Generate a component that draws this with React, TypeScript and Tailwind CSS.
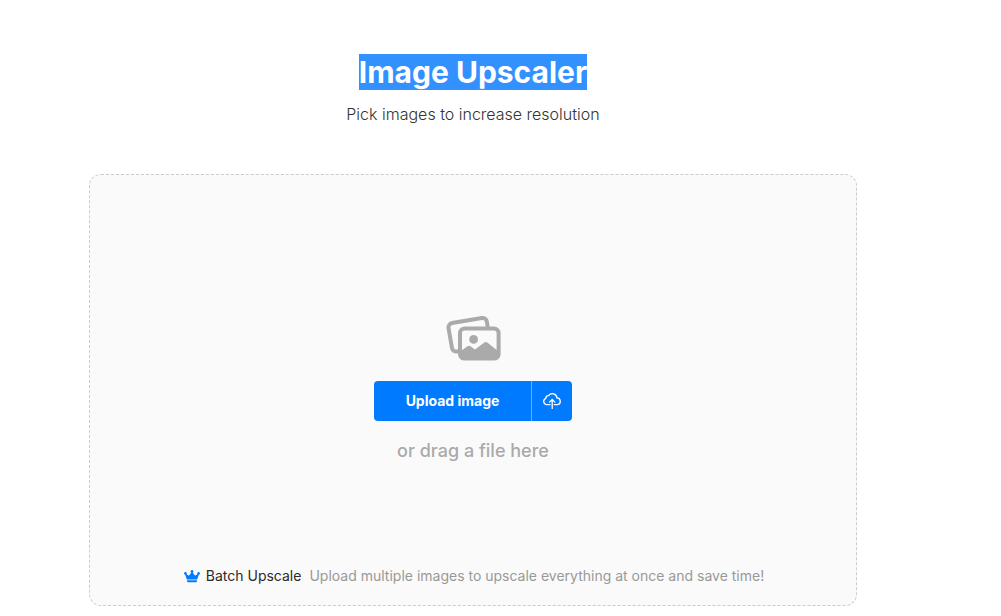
function ImagesIcon() {
  return (
    <svg
      className="w-14 h-[46px] text-[#aaaaaa]"
      viewBox="0 0 56 46"
      fill="none"
      aria-hidden="true"
    >
      <path
        d="M42.7 12 L41.9 6.8 A4.4 4.4 0 0 0 36.9 3.1 L7 8 A4.4 4.4 0 0 0 3.5 13 L7 33 A4.4 4.4 0 0 0 12 36.5 L14 36.2"
        stroke="currentColor"
        strokeWidth="4"
      />
      <rect
        x="15"
        y="13.6"
        width="38.6"
        height="30"
        rx="4.6"
        stroke="currentColor"
        strokeWidth="4"
      />
      <circle cx="28.6" cy="24.4" r="4.4" fill="currentColor" />
      <path
        d="M15 36.5 L22.5 31.3 Q24 30.3 25.5 31.3 L30 34.5 L39 27.7 Q40.8 26.4 42.6 27.7 L53.6 36.5 V39 Q53.6 43.6 49 43.6 H19.6 Q15 43.6 15 39 Z"
        fill="currentColor"
      />
    </svg>
  );
}

function CloudUploadIcon() {
  return (
    <svg
      className="w-5 h-5"
      viewBox="0 0 20 20"
      fill="none"
      stroke="currentColor"
      strokeWidth="1.3"
      strokeLinecap="round"
      strokeLinejoin="round"
      aria-hidden="true"
    >
      <path d="M8 13.7 H4.4 A3.3 3.3 0 0 1 3.8 7.4 A2.8 2.8 0 0 1 6.6 4.6 A4.7 4.7 0 0 1 15 6.8 A3.5 3.5 0 0 1 15.6 13.7 H12.2" />
      <path d="M10.2 17.4 V8.6 M7.5 11.1 L10.2 8.5 L12.9 11.1" />
    </svg>
  );
}

function CrownIcon() {
  return (
    <svg
      className="w-4 h-4 text-[#007bff]"
      viewBox="0 0 16 16"
      fill="currentColor"
      aria-hidden="true"
    >
      <circle cx="8" cy="3.3" r="1.3" />
      <circle cx="1.4" cy="5.4" r="1.3" />
      <circle cx="14.6" cy="5.4" r="1.3" />
      <path d="M1 6 L2.2 5.6 Q4 8 5.2 7.3 Q6.6 6.6 7.2 4 H8.8 Q9.4 6.6 10.8 7.3 Q12 8 13.8 5.6 L15 6 L13.2 11.6 H2.8 Z" />
      <path d="M3 12.2 H13 V13 Q13 14.2 11.8 14.2 H4.2 Q3 14.2 3 13 Z" />
    </svg>
  );
}

function Dropzone() {
  return (
    <section className="w-full max-w-3xl flex flex-col items-center rounded-xl border border-dashed border-[#cccccc] bg-[#fafafa] px-4 pt-[140px] pb-[19px]">
      <ImagesIcon />

      <div className="mt-5 flex h-10 rounded overflow-hidden bg-[#007bff] text-white">
        <button
          type="button"
          className="px-8 text-sm font-bold cursor-pointer"
        >
          Upload image
        </button>
        <button
          type="button"
          aria-label="Upload from cloud"
          className="w-[41px] flex items-center justify-center border-l border-[#66b0ff] cursor-pointer"
        >
          <CloudUploadIcon />
        </button>
      </div>

      <p className="mt-4 text-lg leading-7 font-medium text-[#aaaaaa]">
        or drag a file here
      </p>

      <div className="mt-[101px] pl-0.5 flex flex-wrap items-center justify-center text-sm leading-5">
        <CrownIcon />
        <span className="ml-1.5 text-[#2b2b2b]">Batch Upscale</span>
        <span className="ml-2 text-[#999999]">
          Upload multiple images to upscale everything at once and save time!
        </span>
      </div>
    </section>
  );
}

export default function App() {
  return (
    <main className="min-h-screen bg-white pl-4 pr-[71px] pt-[54px] pb-2 font-['Inter',sans-serif] flex flex-col items-center">
      <h1 className="text-3xl leading-9 font-bold">
        <mark className="bg-[#3390ff] text-white">Image Upscaler</mark>
      </h1>
      <p className="mt-3 mb-12 text-base leading-6 font-[350] text-[#333333]">
        Pick images to increase resolution
      </p>
      <Dropzone />
    </main>
  );
}
